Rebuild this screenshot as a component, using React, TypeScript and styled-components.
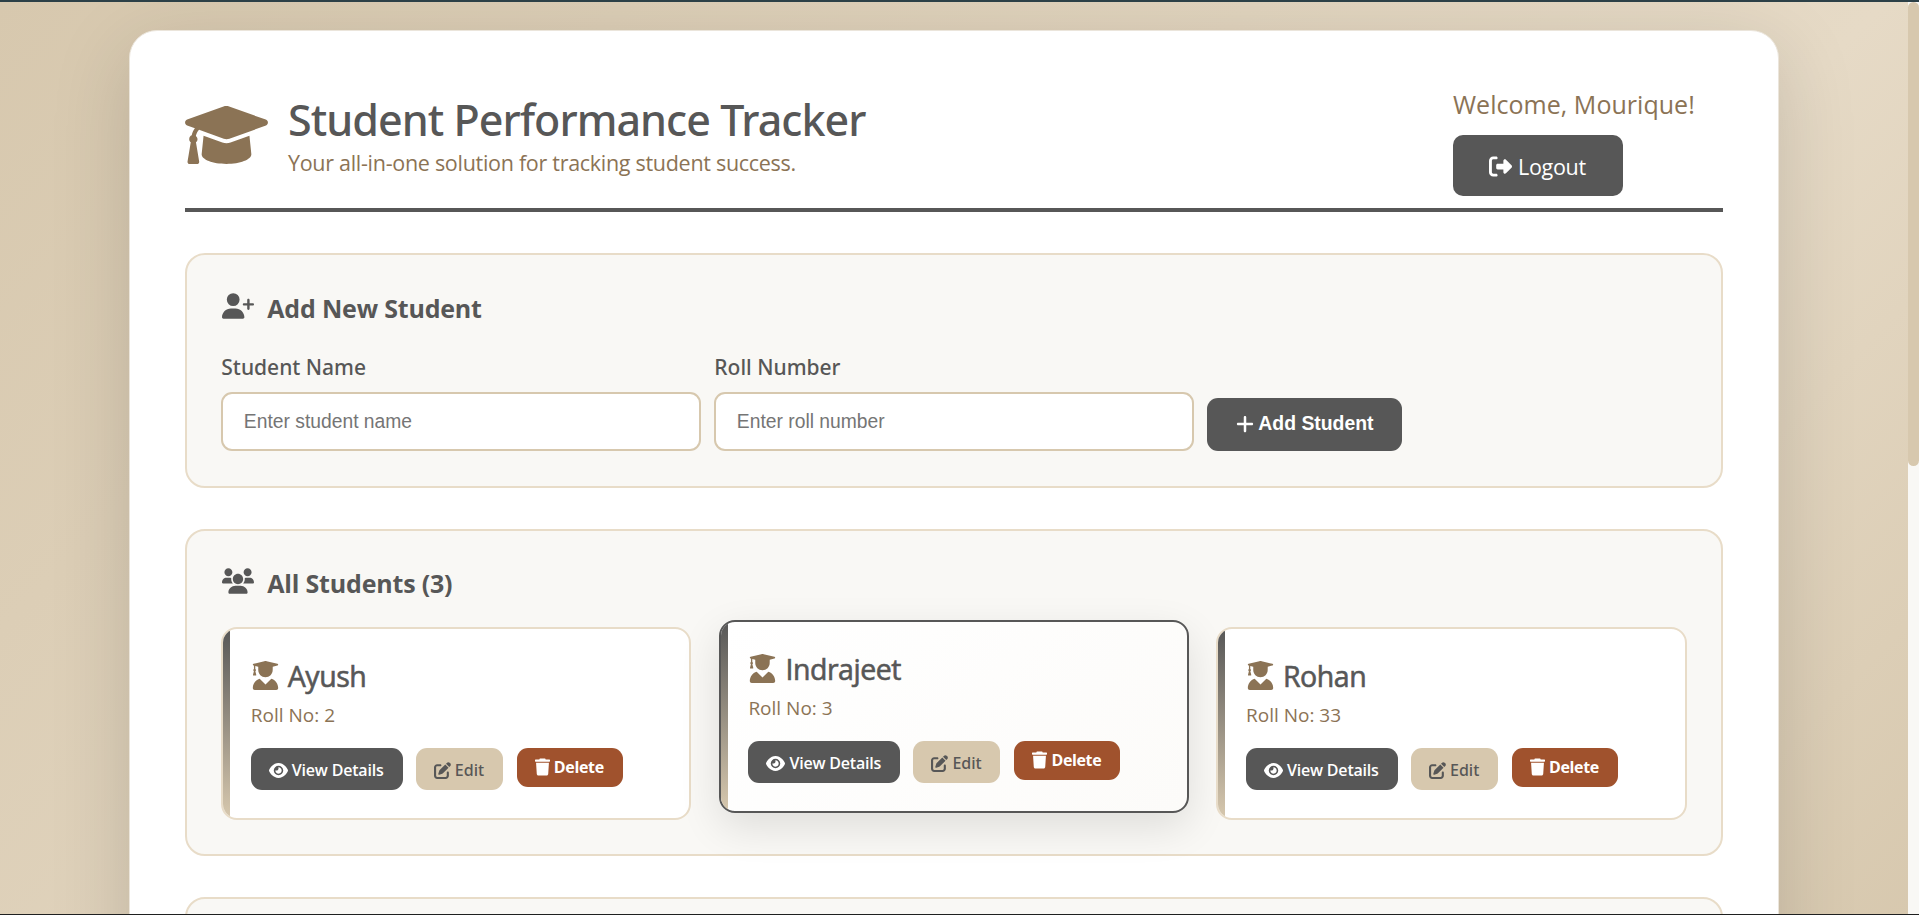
import React from "react";
import styled, { createGlobalStyle, css } from "styled-components";
import { FaEye, FaRightFromBracket, FaPenToSquare, FaPlus, FaUserPlus } from "react-icons/fa6";

const color = {
  dark: "#575757",
  brown: "#8b7355",
  beige: "#d7c8ae",
  light: "#e8dcc8",
  cream: "#f9f8f5",
  rust: "#a0522d",
};

const GlobalStyle = createGlobalStyle`
  *, *::before, *::after { box-sizing: border-box; }
  body { margin: 0; overflow: hidden; font-family: "Open Sans", "Noto Sans", sans-serif; color: ${color.dark}; }
  h1, h2, h3, p { margin: 0; }
  svg { display: block; flex: none; }
`;

const Window = styled.div`
  display: flex;
  flex-direction: column;
  height: 915px;
  border-top: 2px solid #2c4047;
  border-bottom: 1px solid #1f2020;
`;

const Viewport = styled.div`
  display: flex;
  flex: 1;
  min-height: 0;
`;

const Scroller = styled.div`
  flex: 1;
  overflow: hidden;
`;

const Page = styled.div`
  height: 1790px;
  padding-top: 28px;
  background: linear-gradient(135deg, ${color.beige} 0%, #e6dac6 51%, ${color.beige} 77%);
`;

const ScrollTrack = styled.div`
  width: 11px;
  background: ${color.cream};
`;

const ScrollThumb = styled.div`
  height: 464px;
  border-radius: 6px;
  background: ${color.beige};
`;

const Container = styled.main`
  width: 1650px;
  height: 1730px;
  margin: 0 auto;
  padding: 54px 55px;
  background: #fff;
  border: 1px solid #ebe5db;
  border-radius: 28px;
  box-shadow: 0 20px 80px rgba(0, 0, 0, 0.15);
`;

const Header = styled.header`
  display: flex;
  justify-content: space-between;
  height: 127px;
  border-bottom: 4px solid ${color.dark};
  margin-bottom: 41px;
`;

const Brand = styled.div`
  display: flex;
  gap: 20px;
  color: ${color.brown};

  svg { width: 83px; height: 58px; margin-top: 21px; }
`;

const Title = styled.h1`
  margin-top: 10px;
  font: 500 43px/50px "Noto Sans", sans-serif;
  letter-spacing: -0.95px;
  color: ${color.dark};
`;

const Tagline = styled.p`
  margin-top: 3px;
  font-size: 21.5px;
  line-height: 30px;
  letter-spacing: -0.29px;
`;

const Account = styled.div`
  width: 270px;
  padding-top: 2px;
`;

const Welcome = styled.p`
  font-size: 25px;
  line-height: 34px;
  letter-spacing: 0.03px;
  color: ${color.brown};
`;

const LogoutButton = styled.button`
  display: flex;
  align-items: center;
  gap: 6px;
  width: 170px;
  height: 61px;
  margin-top: 14px;
  padding: 2px 0 0 36px;
  border: 0;
  border-radius: 10px;
  background: ${color.dark};
  color: #fff;
  font: 400 21.5px "Open Sans", sans-serif;
  letter-spacing: -0.3px;
`;

const Section = styled.section<{ $top?: number }>`
  min-height: 200px;
  padding: ${p => p.$top ?? 35}px 34.3px 34px;
  margin-bottom: 41px;
  background: ${color.cream};
  border: 2px solid ${color.light};
  border-radius: 20px;
`;

const Heading = styled.h2`
  display: flex;
  gap: 13px;
  height: 36px;
  margin-bottom: 26px;
  font-size: 25px;
  font-weight: 700;
  line-height: 36px;
  letter-spacing: -0.19px;

  svg { width: 32px; height: 26px; margin: 3px 0 0 1px; }
`;

const Form = styled.form`
  display: flex;
  align-items: flex-end;
  gap: 13px;
  padding-bottom: 1px;
`;

const Field = styled.label`
  display: flex;
  flex-direction: column;
  gap: 10px;
  width: 480px;
  font: 500 21px/30px "Noto Sans", sans-serif;
`;

const Input = styled.input`
  height: 59px;
  padding: 0 20.5px;
  border: 2px solid ${color.beige};
  border-radius: 11px;
  background: #fff;
  font: 400 19.3px "Liberation Sans", sans-serif;

  &::placeholder { color: #757575; opacity: 1; }
`;

const AddButton = styled.button`
  display: flex;
  align-items: center;
  gap: 3px;
  width: 195px;
  height: 53px;
  padding: 0 0 2px 28px;
  border: 0;
  border-radius: 11px;
  background: ${color.dark};
  color: #fff;
  font: 700 19.4px "Liberation Sans", sans-serif;
`;

const Cards = styled.div`
  display: grid;
  grid-template-columns: repeat(3, 470.1px);
  gap: 27.5px;
`;

const Card = styled.article<{ $active?: boolean }>`
  position: relative;
  height: 193px;
  padding: 27px 27.5px 0;
  overflow: hidden;
  background: #fff;
  border: 2px solid ${color.light};
  border-radius: 16px;

  &::before {
    content: "";
    position: absolute;
    inset: 0 auto 0 0;
    width: 7px;
    background: linear-gradient(180deg, ${color.dark}, ${color.beige});
  }

  ${p => p.$active && css`
    transform: translateY(-7px);
    background: linear-gradient(135deg, #fff, #fcfbf9);
    border-color: ${color.dark};
    box-shadow: 0 14px 42px rgba(0, 0, 0, 0.11);
  `}
`;

const StudentName = styled.h3`
  display: flex;
  gap: 8px;
  height: 40px;
  font-size: 28.5px;
  font-weight: 400;
  line-height: 40px;
  letter-spacing: -0.45px;
  -webkit-text-stroke: 0.6px ${color.dark};

  svg { width: 29px; height: 29px; margin-top: 5px; color: ${color.brown}; stroke: none; }
`;

const Roll = styled.p`
  margin-top: 5px;
  font-size: 19px;
  line-height: 28px;
  color: ${color.brown};
`;

const Actions = styled.div`
  display: flex;
  align-items: flex-start;
  gap: 13px;
  margin-top: 19px;
`;

const variants = {
  view: css`width: 152px; height: 42px; padding-top: 2px; background: ${color.dark}; color: #fff; font-weight: 600; letter-spacing: -0.2px;`,
  edit: css`width: 87px; height: 42px; padding-top: 2px; background: ${color.beige}; color: ${color.dark}; font-weight: 500; font-family: "Noto Sans", sans-serif;`,
  remove: css`width: 106px; height: 39px; padding-bottom: 1px; background: ${color.rust}; color: #fff; font-weight: 700; margin-left: 1px; letter-spacing: -0.35px;`,
};

const Action = styled.button<{ $kind: keyof typeof variants }>`
  display: flex;
  align-items: center;
  gap: 4px;
  padding: 0 0 0 18px;
  border: 0;
  border-radius: 11px;
  font: 16px "Open Sans", sans-serif;
  white-space: nowrap;
  ${p => variants[p.$kind]}
`;

const CapIcon = () => (
  <svg viewBox="0 32 640 448" fill="currentColor"><path d="M623.1 136.9l-282.7-101.2c-13.73-4.91-29.7-4.91-43.43 0L16.05 136.9C6.438 140.4 0 149.6 0 160s6.438 19.65 16.05 23.09L76.07 204.6c-11.89 15.8-20.26 34.16-24.55 53.95C40.05 263.4 32 274.8 32 288c0 9.953 4.814 18.49 11.94 24.36l-24.83 149C17.48 471.1 25 480 34.89 480H93.11c9.887 0 17.41-8.879 15.78-18.63l-24.83-149C91.19 306.5 96 297.1 96 288c0-10.29-5.174-19.03-12.72-24.89c4.252-17.76 12.88-33.82 24.94-47.03l190.6 68.23c13.73 4.91 29.7 4.91 43.43 0l282.7-101.2C633.6 179.6 640 170.4 640 160S633.6 140.4 623.1 136.9zM351.1 314.4C341.7 318.1 330.9 320 320 320c-10.92 0-21.69-1.867-32-5.555L142.8 262.5L128 405.3C128 446.6 213.1 480 320 480c105.1 0 192-33.4 192-74.67l-14.78-142.9L351.1 314.4z" /></svg>
);

const UsersIcon = () => (
  <svg viewBox="0 0 640 512" fill="currentColor"><path d="M319.9 320c57.41 0 103.1-46.56 103.1-104c0-57.44-46.54-104-103.1-104c-57.41 0-103.1 46.56-103.1 104C215.9 273.4 262.5 320 319.9 320zM369.9 352H270.1C191.6 352 128 411.7 128 485.3C128 500.1 140.7 512 156.4 512h327.2C499.3 512 512 500.1 512 485.3C512 411.7 448.4 352 369.9 352zM512 160c44.18 0 80-35.82 80-80S556.2 0 512 0c-44.18 0-80 35.82-80 80S467.8 160 512 160zM183.9 216c0-5.449 .9824-10.63 1.609-15.91C174.6 194.1 162.6 192 149.9 192H88.08C39.44 192 0 233.8 0 285.3C0 295.6 7.887 304 17.62 304h199.5C196.7 280.2 183.9 249.7 183.9 216zM128 160c44.18 0 80-35.82 80-80S172.2 0 128 0C83.82 0 48 35.82 48 80S83.82 160 128 160zM551.9 192h-61.84c-12.8 0-24.88 3.037-35.86 8.24C454.8 205.5 455.8 210.6 455.8 216c0 33.71-12.78 64.21-33.16 88h199.7C632.1 304 640 295.6 640 285.3C640 233.8 600.6 192 551.9 192z" /></svg>
);

const GraduateIcon = () => (
  <svg viewBox="0 0 512 512" fill="currentColor"><path d="M45.63 79.75L52 81.25v58.5C45 143.9 40 151.3 40 160c0 8.375 4.625 15.38 11.12 19.75L35.5 242C33.75 248.9 37.63 256 43.13 256h41.75c5.5 0 9.375-7.125 7.625-13.1L76.88 179.8C83.38 175.4 88 168.4 88 160c0-8.75-5-16.12-12-20.25V87.13L128 99.63l.001 60.37c0 70.75 57.25 128 128 128s127.1-57.25 127.1-128L384 99.62l82.25-19.87c18.25-4.375 18.25-27 0-31.5l-190.4-46c-13-3-26.62-3-39.63 0l-190.6 46C27.5 52.63 27.5 75.38 45.63 79.75zM359.2 312.8l-103.2 103.2l-103.2-103.2c-69.93 22.3-120.8 87.2-120.8 164.5C32 496.5 47.53 512 66.67 512h378.7C464.5 512 480 496.5 480 477.3C480 400 429.1 335.1 359.2 312.8z" /></svg>
);

const TrashIcon = () => (
  <svg width="15" height="18" viewBox="0 0 448 512" fill="currentColor"><path d="M53.21 467c1.562 24.84 23.02 45 47.9 45h245.8c24.88 0 46.33-20.16 47.9-45L416 128H32L53.21 467zM432 32H320l-11.58-23.16c-2.709-5.42-8.25-8.844-14.31-8.844H153.9c-6.061 0-11.6 3.424-14.31 8.844L128 32H16c-8.836 0-16 7.162-16 16V80c0 8.836 7.164 16 16 16h416c8.838 0 16-7.164 16-16V48C448 39.16 440.8 32 432 32z" /></svg>
);

const students = [
  { name: "Ayush", roll: 2 },
  { name: "Indrajeet", roll: 3, active: true },
  { name: "Rohan", roll: 33 },
];

export default function App() {
  return (
    <Window>
      <GlobalStyle />
      <Viewport>
        <Scroller>
          <Page>
            <Container>
              <Header>
                <Brand>
                  <CapIcon />
                  <div>
                    <Title>Student Performance Tracker</Title>
                    <Tagline>Your all-in-one solution for tracking student success.</Tagline>
                  </div>
                </Brand>
                <Account>
                  <Welcome>Welcome, Mourique!</Welcome>
                  <LogoutButton><FaRightFromBracket size={23} />Logout</LogoutButton>
                </Account>
              </Header>

              <Section>
                <Heading><FaUserPlus />Add New Student</Heading>
                <Form>
                  <Field>Student Name<Input placeholder="Enter student name" /></Field>
                  <Field>Roll Number<Input placeholder="Enter roll number" /></Field>
                  <AddButton type="button"><FaPlus size={20} />Add Student</AddButton>
                </Form>
              </Section>

              <Section $top={34}>
                <Heading><UsersIcon />{`All Students (${students.length})`}</Heading>
                <Cards>
                  {students.map(s => (
                    <Card key={s.name} $active={s.active}>
                      <StudentName><GraduateIcon />{s.name}</StudentName>
                      <Roll>{`Roll No: ${s.roll}`}</Roll>
                      <Actions>
                        <Action $kind="view"><FaEye size={19} />View Details</Action>
                        <Action $kind="edit"><FaPenToSquare size={17} />Edit</Action>
                        <Action $kind="remove"><TrashIcon />Delete</Action>
                      </Actions>
                    </Card>
                  ))}
                </Cards>
              </Section>

              <Section />
            </Container>
          </Page>
        </Scroller>
        <ScrollTrack><ScrollThumb /></ScrollTrack>
      </Viewport>
    </Window>
  );
}
